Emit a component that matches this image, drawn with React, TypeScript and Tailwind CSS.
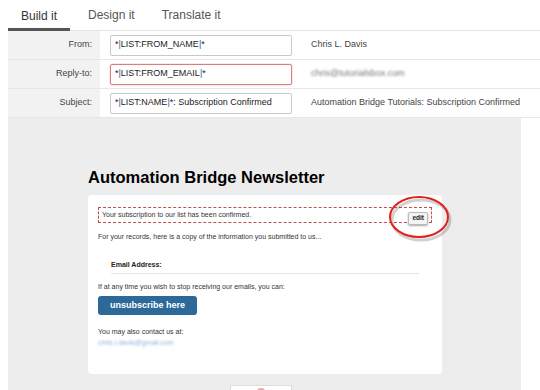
import React from 'react';

const tabs = ['Build it', 'Design it', 'Translate it'];

const Row = ({ label, children, right, error }: { label: string; children: React.ReactNode; right: React.ReactNode; error?: boolean }) => (
  <div className="flex h-[29px] border-b border-[#e6e6e6]">
    <div className="w-[92px] bg-[#f2f2f2] flex items-center justify-end pr-[8px] text-[9px] text-[#444]">{label}</div>
    <div className="pl-[10px] flex items-center">
      <div
        className={
          error
            ? 'w-[182px] h-[21px] border border-[#e07b7b] rounded-[2px] bg-white flex items-center px-[4px] text-[9px] text-[#222] shadow-[0_0_2px_rgba(220,80,80,0.4)]'
            : 'w-[182px] h-[21px] border border-[#c9c9c9] rounded-[2px] bg-white flex items-center px-[4px] text-[9px] text-[#222]'
        }
      >
        {children}
      </div>
    </div>
    <div className="pl-[19px] flex items-center text-[9px] text-[#444]">{right}</div>
  </div>
);

const Pipe = () => <span className="text-[#2a5f9e]">|</span>;

export default function App() {
  return (
    <div className="w-[540px] h-[390px] bg-white overflow-hidden relative" style={{ fontFamily: '"Liberation Sans", Arial, sans-serif' }}>
      <div className="pl-[8px]">
        {/* tabs */}
        <div className="flex h-[31px] border-b border-[#e3e3e3]">
          {tabs.map((t, i) => (
            <div
              key={t}
              className={
                i === 0
                  ? 'w-[62px] flex items-center justify-center text-[12px] text-[#333] border-b-[3px] border-[#555] pt-[3px] -mb-[1px]'
                  : 'flex items-center text-[12px] text-[#555] ml-[18px] mr-[9px] pb-[1px]'
              }
            >
              {t}
            </div>
          ))}
        </div>

        <Row label="From:" right="Chris L. Davis">
          *<Pipe />LIST:FROM_NAME<Pipe />*
        </Row>
        <Row label="Reply-to:" error right={<span className="blur-[1.2px] text-[#777]">chris@tutorialsbox.com</span>}>
          *<Pipe />LIST:FROM_EMAIL<Pipe />*
        </Row>
        <Row label="Subject:" right="Automation Bridge Tutorials: Subscription Confirmed">
          *<Pipe />LIST:NAME<Pipe />*: Subscription Confirmed
        </Row>

        {/* preview panel */}
        <div className="w-[513px] h-[280px] bg-[#ededed] pl-[80px] pt-[50px] relative">
          <h1 className="text-[16.5px] leading-[19px] font-bold text-black mb-[8px]">Automation Bridge Newsletter</h1>
          <div className="w-[354px] bg-white rounded-[4px] px-[10px] pt-[12px] pb-[26px] relative">
            <div className="h-[16px] border border-dashed border-[#c05050] flex items-center justify-between pl-[3px] pr-[3px]">
              <span className="text-[7px] text-[#333]">Your subscription to our list has been confirmed.</span>
              <span className="mt-[6px] h-[13px] px-[3px] flex items-center bg-[#f4f4f4] border border-[#bbb] rounded-[2px] shadow-[0_1px_2px_rgba(0,0,0,0.35)] text-[6.5px] font-bold text-[#222]">edit</span>
            </div>
            <p className="mt-[9px] text-[7px] leading-[10px] text-[#333]">For your records, here is a copy of the information you submitted to us...</p>
            <div className="mx-[13px] mt-[18px] pb-[3px] border-b border-[#e6e6e6] text-[7px] leading-[10px] font-bold text-[#222]">Email Address:</div>
            <p className="mt-[8px] text-[7px] leading-[10px] text-[#333]">If at any time you wish to stop receiving our emails, you can:</p>
            <div className="mt-[4px] w-[99px] h-[19px] rounded-[3px] bg-[#2c6898] flex items-center justify-center text-[9px] font-bold text-white">unsubscribe here</div>
            <p className="mt-[12px] text-[7px] leading-[10px] text-[#333]">You may also contact us at:</p>
            <p className="mt-[1px] text-[7px] leading-[10px] text-[#8fb4dc] blur-[1px]">chris.l.davis@gmail.com</p>

            {/* annotation ellipse */}
            <svg className="absolute left-[300px] top-[0px]" width="64" height="48" viewBox="0 0 64 48">
              <ellipse cx="32" cy="23" rx="29" ry="20" fill="none" stroke="rgba(0,0,0,0.18)" strokeWidth="3" transform="translate(1 2)" />
              <ellipse cx="31" cy="22" rx="29" ry="20" fill="none" stroke="#e2201c" strokeWidth="2" />
            </svg>
          </div>
          <div className="absolute left-[222px] top-[267px] w-[62px] h-[20px] bg-white border border-[#ddd] flex justify-center">
            <div className="w-[10px] h-[5px] mt-[2px] rounded-t-full bg-[#f3a0b0]" />
          </div>
        </div>
      </div>
    </div>
  );
}
